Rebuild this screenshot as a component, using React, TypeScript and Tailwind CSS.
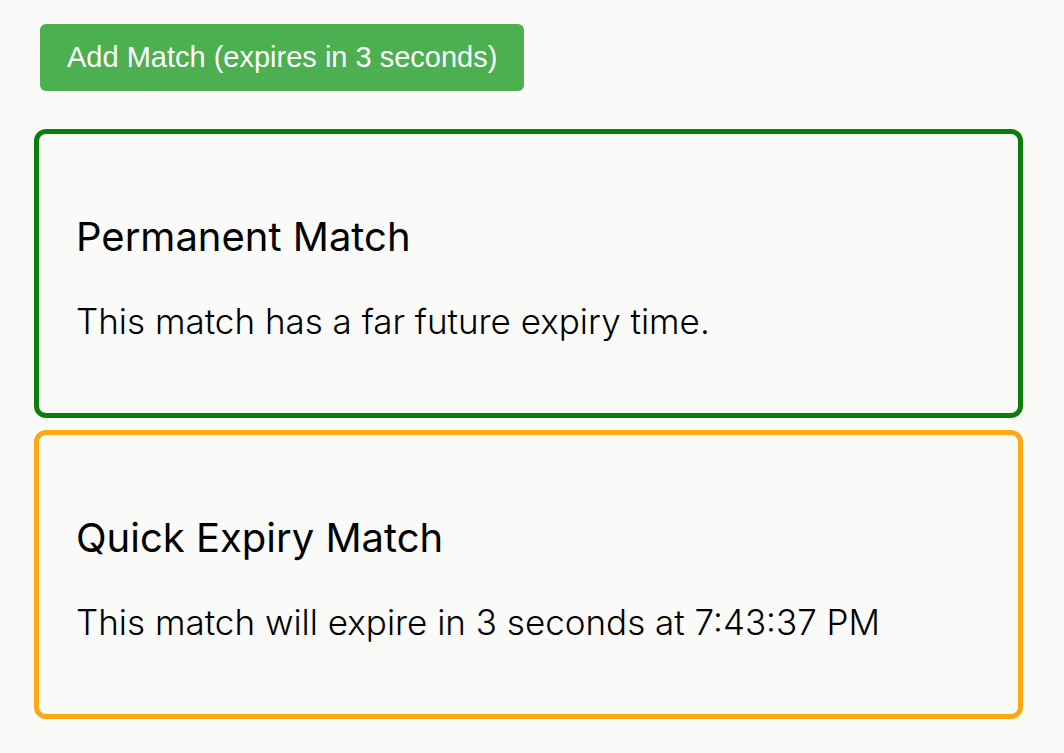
export default function App() {
  return (
    <div className="min-h-[753px] bg-[#fafaf9] px-[34px] pt-[24px] font-['Inter',sans-serif] text-black">
      <button className="ml-[6px] h-[67px] rounded-[6px] bg-[#4caf50] px-[27px] font-['Liberation_Sans',Arial,sans-serif] text-[29px] text-white">
        Add Match (expires in 3 seconds)
      </button>
      <div className="mt-[38px] flex w-[989px] flex-col gap-[12px]">
        <div className="flex h-[289px] flex-col justify-center rounded-[12px] border-[5px] border-[#0a7e0a] px-[37px] pt-[8px]">
          <h3 className="text-[40px] leading-[48px]">Permanent Match</h3>
          <p className="mt-[38px] text-[35px] leading-[44px] font-light">This match has a far future expiry time.</p>
        </div>
        <div className="flex h-[289px] flex-col justify-center rounded-[12px] border-[5px] border-[#ffa812] px-[37px] pt-[8px]">
          <h3 className="text-[40px] leading-[48px]">Quick Expiry Match</h3>
          <p className="mt-[38px] text-[35px] leading-[44px] font-light">This match will expire in 3 seconds at 7:43:37 PM</p>
        </div>
      </div>
    </div>
  );
}
